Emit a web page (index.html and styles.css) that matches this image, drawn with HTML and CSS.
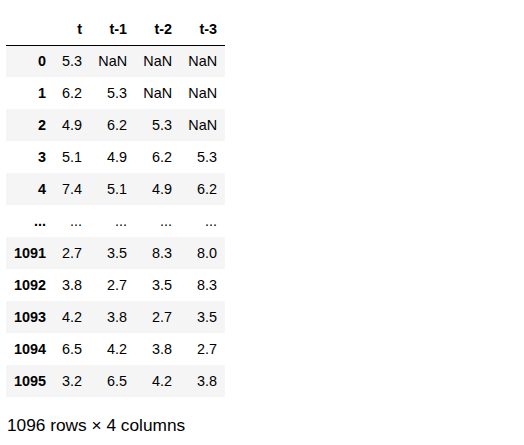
FILE: index.html
```html
<!DOCTYPE html>
<html>
<head>
<meta charset="utf-8">
<link rel="stylesheet" href="styles.css">
</head>
<body>
<div class="output">
<table class="dataframe">
<thead>
<tr><th class="c-idx"></th><th class="c-t">t</th><th class="c-n">t-1</th><th class="c-n">t-2</th><th class="c-n">t-3</th></tr>
</thead>
<tbody>
<tr><th>0</th><td>5.3</td><td>NaN</td><td>NaN</td><td>NaN</td></tr>
<tr><th>1</th><td>6.2</td><td>5.3</td><td>NaN</td><td>NaN</td></tr>
<tr><th>2</th><td>4.9</td><td>6.2</td><td>5.3</td><td>NaN</td></tr>
<tr><th>3</th><td>5.1</td><td>4.9</td><td>6.2</td><td>5.3</td></tr>
<tr><th>4</th><td>7.4</td><td>5.1</td><td>4.9</td><td>6.2</td></tr>
<tr><th>...</th><td>...</td><td>...</td><td>...</td><td>...</td></tr>
<tr><th>1091</th><td>2.7</td><td>3.5</td><td>8.3</td><td>8.0</td></tr>
<tr><th>1092</th><td>3.8</td><td>2.7</td><td>3.5</td><td>8.3</td></tr>
<tr><th>1093</th><td>4.2</td><td>3.8</td><td>2.7</td><td>3.5</td></tr>
<tr><th>1094</th><td>6.5</td><td>4.2</td><td>3.8</td><td>2.7</td></tr>
<tr><th>1095</th><td>3.2</td><td>6.5</td><td>4.2</td><td>3.8</td></tr>
</tbody>
</table>
<p class="shape">1096 rows × 4 columns</p>
</div>
</body>
</html>
```
FILE: styles.css
```css
html, body {
  margin: 0;
  padding: 0;
  background: #fff;
}
body {
  font-family: "Liberation Sans", Arial, sans-serif;
  color: #000;
}
.output {
  padding: 12px 0 0 6px;
}
.dataframe {
  border-collapse: collapse;
  border-spacing: 0;
  font-size: 14.4px;
}
.dataframe th,
.dataframe td {
  height: 32px;
  padding: 0 8px;
  text-align: right;
  vertical-align: middle;
  white-space: nowrap;
  box-sizing: border-box;
}
.dataframe th {
  font-weight: bold;
}
.dataframe thead th {
  height: 33px;
  padding-top: 1px;
  border-bottom: 1px solid #000;
}
.dataframe .c-idx { width: 48px; }
.dataframe .c-t { width: 36px; }
.dataframe .c-n { width: 45px; }
.dataframe tbody tr:nth-child(odd) {
  background: #f5f5f5;
}
.dataframe tbody tr:nth-child(6) {
  background: #fff;
}
.shape {
  margin: 18px 0 0 1px;
  font-size: 17.3px;
}
```
